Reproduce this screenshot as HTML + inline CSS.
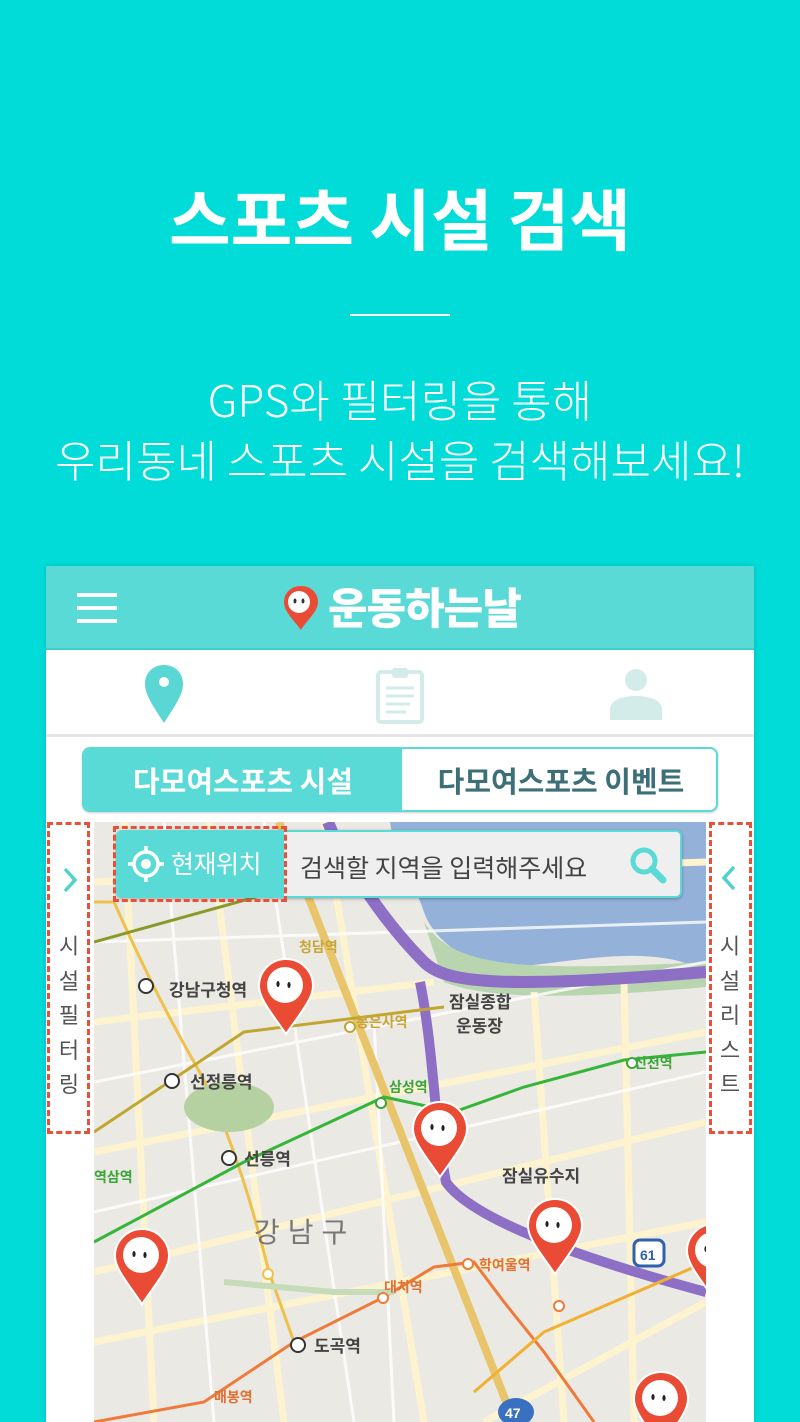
<!DOCTYPE html>
<html><head><meta charset="utf-8">
<style>
*{margin:0;padding:0;box-sizing:border-box}
body{width:800px;height:1422px;background:#01dcd9;font-family:"Liberation Sans","Noto Sans CJK KR",sans-serif;position:relative;overflow:hidden}
.t{position:absolute;left:0;width:800px;text-align:center;color:#fff}
.abs{position:absolute}
</style></head><body>
<div class="t" style="top:172px;font-size:67px;font-weight:700;line-height:90px;font-family:'Noto Sans CJK KR',sans-serif;">스포츠 시설 검색</div>
<div class="abs" style="left:350px;top:314px;width:100px;height:2px;background:#fff"></div>
<div class="t" style="top:368px;font-size:44px;font-weight:300;line-height:60px;font-family:'Noto Sans CJK KR',sans-serif;">GPS와 필터링을 통해<br>우리동네 스포츠 시설을 검색해보세요!</div>

<!-- card -->
<div class="abs" style="left:46px;top:566px;width:708px;height:856px;background:#fff;box-shadow:0 0 6px rgba(0,0,0,.15)"></div>
<div class="abs" style="left:46px;top:566px;width:708px;height:84px;background:#5adad6;border-bottom:2px solid #3fcfcb"></div>
<div class="abs" style="left:77px;top:593px;width:40px;height:4px;background:#fff;box-shadow:0 13px 0 #fff,0 26px 0 #fff"></div>
<svg class="abs" style="left:282px;top:584px" width="40" height="48" viewBox="0 0 40 48">
<path d="M19 2C9 2 2 9 2 18c0 10 10 18 17 28 5-9 17-18 17-28C36 9 29 2 19 2z" fill="#e94b35"/>
<circle cx="17" cy="18" r="11" fill="#fff"/><ellipse cx="13" cy="17" rx="1.5" ry="2.5" fill="#333"/><ellipse cx="21" cy="17" rx="1.5" ry="2.5" fill="#333"/>
</svg>
<div class="abs" style="left:328px;top:579px;font-size:43px;font-weight:900;color:#fff;font-family:'Noto Sans CJK KR',sans-serif;line-height:54px;letter-spacing:-1px">운동하는날</div>

<!-- icon row -->
<svg class="abs" style="left:144px;top:664px" width="40" height="60" viewBox="0 0 40 60">
<path d="M20 1C9 1 1 9 1 20c0 12 11 26 19 39 8-13 19-27 19-39C39 9 31 1 20 1z" fill="#5ad6d4"/><circle cx="20" cy="18" r="5" fill="#fff"/></svg>
<svg class="abs" style="left:376px;top:666px" width="48" height="58" viewBox="0 0 48 58">
<rect x="2" y="6" width="44" height="50" rx="3" fill="none" stroke="#d3ebe9" stroke-width="4"/>
<rect x="16" y="2" width="16" height="10" rx="3" fill="#d3ebe9"/>
<g stroke="#d3ebe9" stroke-width="3"><line x1="10" y1="22" x2="38" y2="22"/><line x1="10" y1="30" x2="38" y2="30"/><line x1="10" y1="38" x2="34" y2="38"/><line x1="10" y1="46" x2="30" y2="46"/></g></svg>
<svg class="abs" style="left:609px;top:668px" width="54" height="52" viewBox="0 0 54 52">
<circle cx="27" cy="12" r="11" fill="#d3ebe9"/><path d="M1 52v-10c0-10 12-14 26-14s26 4 26 14v10z" fill="#d3ebe9"/></svg>
<div class="abs" style="left:46px;top:734px;width:708px;height:3px;background:#e6e6e6"></div>

<!-- tabs -->
<div class="abs" style="left:82px;top:747px;width:636px;height:65px;border:2px solid #5adad6;border-radius:8px;overflow:hidden;background:#fff;box-shadow:0 1px 2px rgba(0,0,0,.2)">
<div style="position:absolute;left:0;top:0;width:318px;height:65px;background:#5adad6;color:#fff;font-size:29px;font-weight:700;text-align:center;line-height:62px;font-family:'Noto Sans CJK KR',sans-serif">다모여스포츠 시설</div>
<div style="position:absolute;left:318px;top:0;width:318px;height:65px;color:#3d6f78;font-size:29px;font-weight:700;text-align:center;line-height:62px;font-family:'Noto Sans CJK KR',sans-serif">다모여스포츠 이벤트</div>
</div>

<!-- map -->
<svg class="abs" style="left:94px;top:822px" width="612" height="600" viewBox="0 0 612 600">
<rect width="612" height="600" fill="#ebe9e4"/>
<path d="M296 0H612V150C560 120 480 140 420 145 380 148 340 120 330 90 320 60 300 30 296 0z" fill="#93b1d9"/>
<path d="M330 100C360 145 420 150 612 140V165C500 175 400 180 350 160z" fill="#b8d5b0"/>
<g fill="none" stroke="#fdf4cf" stroke-width="7">
<path d="M0 60L612 40"/><path d="M0 200L340 160"/><path d="M0 330L612 210"/><path d="M0 450L612 300"/><path d="M0 520L612 400"/>
<path d="M30 0L60 600"/><path d="M115 0L190 600"/><path d="M230 0L330 600"/><path d="M440 170L470 600"/><path d="M530 160L540 600"/><path d="M390 600L612 480"/>
</g>
<g fill="none" stroke="#fff" stroke-width="3" opacity=".8"><path d="M0 120L612 100"/><path d="M0 260L612 140"/><path d="M0 390L612 250"/><path d="M70 0L120 600"/><path d="M170 0L260 600"/><path d="M280 200L300 600"/></g>
<path d="M185 0L420 600" stroke="#e8c46a" stroke-width="8" fill="none"/>
<path d="M0 80L20 80Q60 170 100 240T175 450L200 520" stroke="#efc04a" stroke-width="3" fill="none"/>
<path d="M234 0C250 40 290 100 330 140 350 160 400 168 612 150" stroke="#8d6fc6" stroke-width="12" fill="none"/>
<path d="M326 160C340 230 340 300 352 360 380 400 500 440 612 470" stroke="#8d6fc6" stroke-width="10" fill="none"/>
<path d="M0 420L150 340 290 275 360 290 430 265 530 238 612 230" stroke="#35b53a" stroke-width="3" fill="none"/>
<path d="M0 120L180 70 270 40" stroke="#8a9a2a" stroke-width="3" fill="none"/>
<path d="M0 310L150 210 350 185" stroke="#c0a530" stroke-width="3" fill="none"/>
<path d="M0 600L110 580 200 520 290 475 340 445 380 440 410 480 450 530 500 600" stroke="#ef7a3a" stroke-width="3" fill="none"/>
<path d="M380 570L450 510 612 440" stroke="#f0b030" stroke-width="3" fill="none"/>
<path d="M130 460L240 470 300 470" stroke="#c6dbb8" stroke-width="6" fill="none"/>
<ellipse cx="135" cy="285" rx="45" ry="25" fill="#b5d1a2"/>
<g font-family="Noto Sans CJK KR,sans-serif" font-size="17" font-weight="700" fill="#444">
<text x="75" y="174">강남구청역</text><text x="96" y="266">선정릉역</text><text x="150" y="343">선릉역</text><text x="220" y="530">도곡역</text>
<text x="355" y="186">잠실종합</text><text x="362" y="210">운동장</text><text x="408" y="360">잠실유수지</text>
</g>
<text x="160" y="420" font-family="Noto Sans CJK KR,sans-serif" font-size="28" fill="#777" letter-spacing="8">강남구</text>
<g font-family="Noto Sans CJK KR,sans-serif" font-size="14" font-weight="700" fill="#3aa63a"><text x="540" y="246">신천역</text><text x="295" y="270">삼성역</text><text x="0" y="360">역삼역</text></g>
<g font-family="Noto Sans CJK KR,sans-serif" font-size="14" font-weight="700" fill="#c9a535"><text x="205" y="130">청담역</text><text x="262" y="205">봉은사역</text></g>
<g font-family="Noto Sans CJK KR,sans-serif" font-size="14" font-weight="700" fill="#e27030"><text x="290" y="470">대치역</text><text x="385" y="448">학여울역</text><text x="120" y="580">매봉역</text></g>
<g fill="#fff" stroke="#333" stroke-width="2"><circle cx="52" cy="164" r="7"/><circle cx="78" cy="259" r="7"/><circle cx="135" cy="336" r="7"/><circle cx="204" cy="523" r="7"/></g>
<g fill="#fff" stroke="#3aa63a" stroke-width="2"><circle cx="287" cy="281" r="5"/><circle cx="538" cy="241" r="5"/></g>
<circle cx="256" cy="205" r="5" fill="#fff" stroke="#c0a530" stroke-width="2"/>
<circle cx="174" cy="452" r="5" fill="#fff" stroke="#efc04a" stroke-width="2"/>
<circle cx="289" cy="476" r="5" fill="#fff" stroke="#ef7a3a" stroke-width="2"/><circle cx="374" cy="442" r="5" fill="#fff" stroke="#ef7a3a" stroke-width="2"/><circle cx="465" cy="484" r="5" fill="#fff" stroke="#ef7a3a" stroke-width="2"/>
<rect x="540" y="418" width="30" height="26" rx="6" fill="#fff" stroke="#3060b0" stroke-width="3"/><text x="546" y="438" font-size="14" font-weight="700" fill="#3060b0" font-family="Liberation Sans">61</text>
<ellipse cx="422" cy="590" rx="18" ry="14" fill="#3a70c0"/><text x="411" y="596" font-size="14" font-weight="700" fill="#fff" font-family="Liberation Sans">47</text>
<defs><g id="pin"><path d="M0-38C-15-38-27-26-27-11-27 1-16 14 0 37 16 14 27 1 27-11 27-26 15-38 0-38z" fill="#e94b35" stroke="#fff" stroke-width="2"/><circle cx="-1" cy="-12" r="18" fill="#fff"/><ellipse cx="-8" cy="-13" rx="1.6" ry="3" fill="#222"/><ellipse cx="3" cy="-12" rx="1.6" ry="3" fill="#222"/></g></defs>
<use href="#pin" x="192" y="175"/><use href="#pin" x="346" y="318"/><use href="#pin" x="461" y="415"/><use href="#pin" x="48" y="445"/><use href="#pin" x="567" y="588"/><use href="#pin" x="620" y="440"/>
</svg>

<!-- search bar -->
<div class="abs" style="left:116px;top:830px;width:566px;height:68px;background:#efefef;border:2px solid #5adad6;border-radius:6px;overflow:hidden;box-shadow:0 1px 3px rgba(0,0,0,.3)">
<div style="position:absolute;left:0;top:0;width:166px;height:68px;background:#5adad6"></div>
<div style="position:absolute;left:182px;top:0;line-height:70px;font-size:25px;color:#444;font-family:'Noto Sans CJK KR',sans-serif">검색할 지역을 입력해주세요</div>
</div>
<svg class="abs" style="left:128px;top:846px" width="36" height="36" viewBox="0 0 36 36"><circle cx="18" cy="18" r="12" fill="none" stroke="#fff" stroke-width="3.5"/><circle cx="18" cy="18" r="5" fill="#fff"/><g stroke="#fff" stroke-width="3.5"><line x1="18" y1="0" x2="18" y2="6"/><line x1="18" y1="30" x2="18" y2="36"/><line x1="0" y1="18" x2="6" y2="18"/><line x1="30" y1="18" x2="36" y2="18"/></g></svg>
<div class="abs" style="left:171px;top:845px;font-size:25px;color:#fff;line-height:36px;font-family:'Noto Sans CJK KR',sans-serif;letter-spacing:-0.5px">현재위치</div>
<svg class="abs" style="left:628px;top:845px" width="40" height="40" viewBox="0 0 40 40"><circle cx="16" cy="16" r="11" fill="none" stroke="#5adad6" stroke-width="5"/><line x1="24" y1="24" x2="35" y2="35" stroke="#5adad6" stroke-width="7" stroke-linecap="round"/></svg>
<div class="abs" style="left:113px;top:826px;width:174px;height:76px;border:3px dashed #e9503a"></div>

<!-- side panels -->
<div class="abs" style="left:46px;top:822px;width:48px;height:600px;background:#fff"></div>
<div class="abs" style="left:706px;top:822px;width:48px;height:600px;background:#fff"></div>
<div class="abs" style="left:47px;top:822px;width:43px;height:312px;border:3px dashed #e9503a"></div>
<div class="abs" style="left:709px;top:822px;width:43px;height:312px;border:3px dashed #e9503a"></div>
<svg class="abs" style="left:62px;top:866px" width="16" height="28"><path d="M3 3L13 14 3 25" fill="none" stroke="#4fd2ce" stroke-width="3.5"/></svg>
<svg class="abs" style="left:721px;top:864px" width="16" height="28"><path d="M13 3L3 14 13 25" fill="none" stroke="#4fd2ce" stroke-width="3.5"/></svg>
<div class="abs" style="left:46px;top:928px;width:46px;text-align:center;font-size:22px;line-height:34.5px;color:#555;font-family:'Noto Sans CJK KR',sans-serif">시<br>설<br>필<br>터<br>링</div>
<div class="abs" style="left:708px;top:928px;width:44px;text-align:center;font-size:22px;line-height:34.5px;color:#555;font-family:'Noto Sans CJK KR',sans-serif">시<br>설<br>리<br>스<br>트</div>
</body></html>
